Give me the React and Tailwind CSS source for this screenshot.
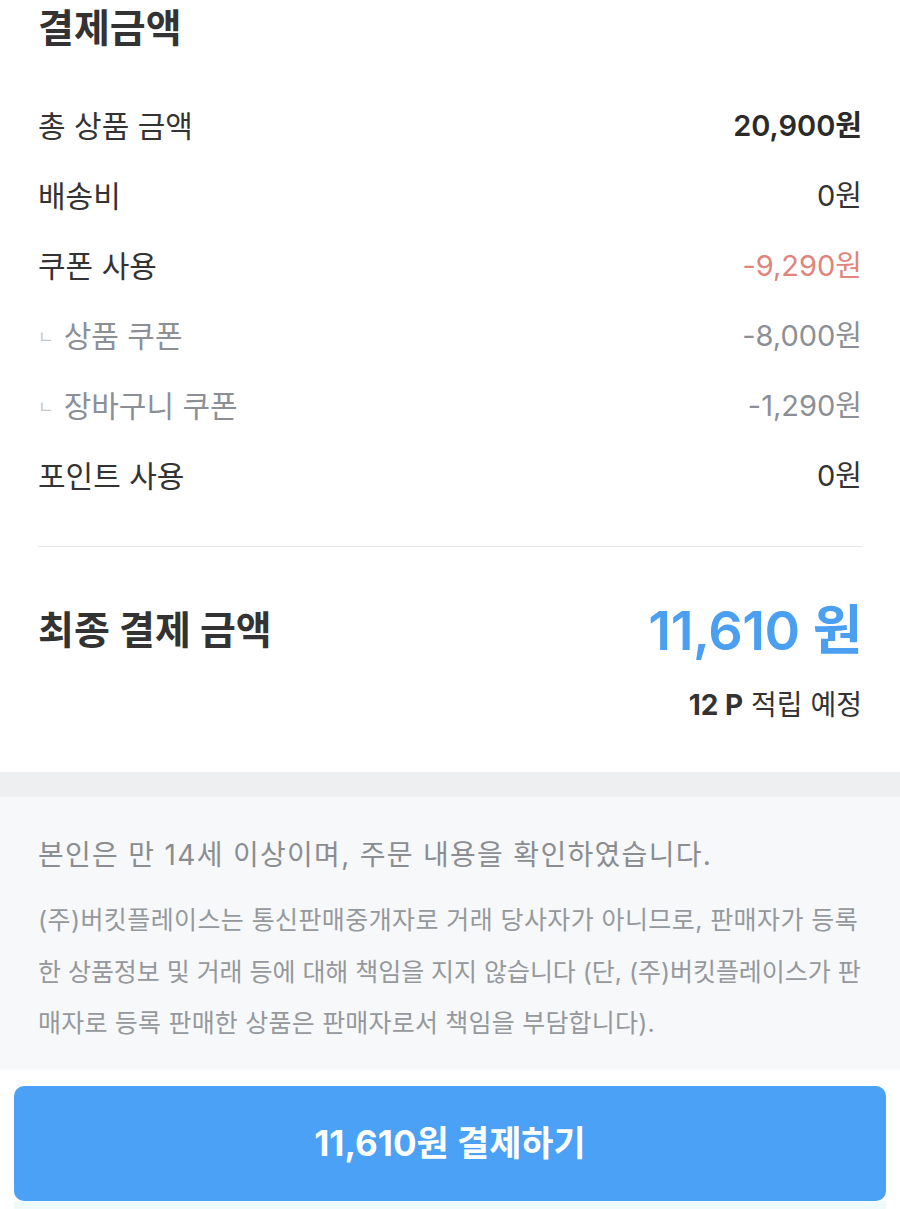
import React from 'react';

const rows = [
  { label: '총 상품 금액', value: '20,900원', valueClass: 'font-semibold text-[#2b2b2b]' },
  { label: '배송비', value: '0원', valueClass: 'text-[#333333]' },
  { label: '쿠폰 사용', value: '-9,290원', valueClass: 'text-[#e0857c]' },
  { label: '상품 쿠폰', value: '-8,000원', valueClass: 'text-[#8c9096]', sub: true },
  { label: '장바구니 쿠폰', value: '-1,290원', valueClass: 'text-[#8c9096]', sub: true },
  { label: '포인트 사용', value: '0원', valueClass: 'text-[#333333]' },
];

const App = () => {
  return (
    <div
      className="w-full bg-white text-[#333333]"
      style={{ fontFamily: 'Inter, "Noto Sans CJK KR", sans-serif' }}
    >
      {/* Summary */}
      <div className="px-[38px]">
        <div className="flex h-[56px] items-center">
          <h2 className="text-[39px] font-bold text-[#333333]">결제금액</h2>
        </div>

        <div className="mt-[35px]">
          {rows.map((row) => (
            <div key={row.label} className="flex h-[70px] items-center justify-between">
              <div className="flex items-center">
                {row.sub && (
                  <span className="mr-[10px] mt-[4px] text-[17px] text-[#c4c7cb]">ㄴ</span>
                )}
                <span className={`text-[30px] ${row.sub ? 'text-[#8c9096]' : 'text-[#333333]'}`}>
                  {row.label}
                </span>
              </div>
              <span className={`text-[29px] ${row.valueClass}`}>{row.value}</span>
            </div>
          ))}
        </div>

        <div className="mt-[35px] h-[1px] bg-[#e6e7e9]" />

        <div className="mt-[48px] flex h-[70px] items-center justify-between">
          <span className="text-[39px] font-bold text-[#333333]">최종 결제 금액</span>
          <span className="text-[54px] font-semibold tracking-[-0.5px] text-[#4a9ff0]">11,610 원</span>
        </div>
        <div className="mt-[20px] flex h-[40px] items-center justify-end">
          <span className="text-[28px] text-[#333333]">
            <span className="font-bold">12 P</span> 적립 예정
          </span>
        </div>
        <div className="h-[47px]" />
      </div>

      {/* Separator band */}
      <div className="h-[25px] bg-[#eeeff1]" />

      {/* Notice */}
      <div className="bg-[#f7f8fa] px-[38px] pt-[40px] pb-[20px]">
        <p className="text-[28px] leading-[36px] tracking-[1.3px] text-[#8a8d91]">
          본인은 만 14세 이상이며, 주문 내용을 확인하였습니다.
        </p>
        <p className="mt-[22px] whitespace-nowrap text-[25px] leading-[51.5px] text-[#95989c]">
          <span className="tracking-[0.4px]">
            (주)버킷플레이스는 통신판매중개자로 거래 당사자가 아니므로, 판매자가 등록
          </span>
          <br />
          <span className="tracking-[-0.05px]">
            한 상품정보 및 거래 등에 대해 책임을 지지 않습니다 (단, (주)버킷플레이스가 판
          </span>
          <br />
          <span className="tracking-[0.2px]">
            매자로 등록 판매한 상품은 판매자로서 책임을 부담합니다).
          </span>
        </p>
      </div>

      {/* Pay button */}
      <div className="bg-white px-[14px] pt-[16px]">
        <button className="flex h-[115px] w-full items-center justify-center rounded-[10px] bg-[#4ba1f6] text-[35px] font-bold text-white">
          11,610원 결제하기
        </button>
      </div>
      <div className="mx-[14px] h-[10px] bg-[#effbfb]" />
    </div>
  );
};

export default App;
